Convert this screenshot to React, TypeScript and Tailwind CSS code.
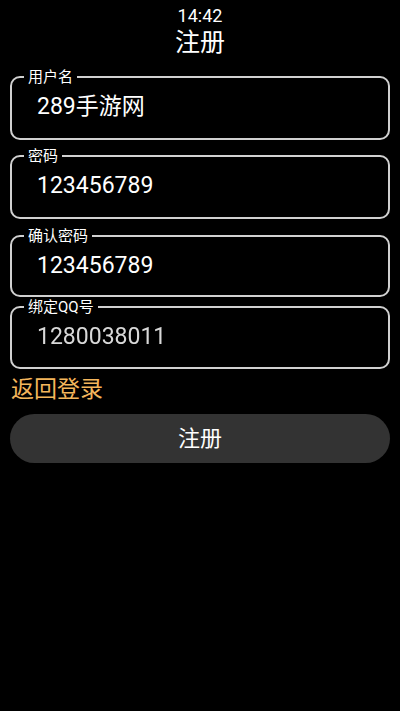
const font = { fontFamily: 'Roboto, "Noto Sans CJK SC", sans-serif' };

type FieldProps = {
  label: string;
  value: string;
  className: string;
  blurred?: boolean;
};

function Field({ label, value, className, blurred }: FieldProps) {
  return (
    <fieldset
      className={`rounded-[10px] border-2 border-[#d0d0d0] ${className}`}
    >
      <legend className="ml-[12px] px-[4px] text-[15px] leading-[16px] text-white">
        {label}
      </legend>
      <div
        className={
          blurred
            ? "pl-[25px] pt-[9px] text-[23px] leading-[26px] text-[#d8d8d8] blur-[0.6px]"
            : "pl-[25px] pt-[9px] text-[23px] leading-[26px] text-white"
        }
      >
        {value}
      </div>
    </fieldset>
  );
}

export default function App() {
  return (
    <main className="min-h-[711px] w-full bg-black px-[10px]" style={font}>
      <div className="pt-[5px] text-center text-[18px] leading-[22px] text-white">
        14:42
      </div>
      <h1 className="text-center text-[25px] leading-[32px] text-white">注册</h1>

      <Field label="用户名" value="289手游网" className="mt-[10px] h-[71px]" />
      <Field label="密码" value="123456789" className="mt-[8px] h-[71px]" />
      <Field label="确认密码" value="123456789" className="mt-[9px] h-[69px]" />
      <Field
        label="绑定QQ号"
        value="1280038011"
        className="mt-[2px] h-[70px]"
        blurred
      />

      <a className="mt-[5px] block pl-[1px] text-[23px] leading-[32px] text-[#f4b65c]">
        返回登录
      </a>

      <button className="mt-[8px] h-[49px] w-full rounded-full bg-[#333333] text-[22px] text-white">
        注册
      </button>
    </main>
  );
}
